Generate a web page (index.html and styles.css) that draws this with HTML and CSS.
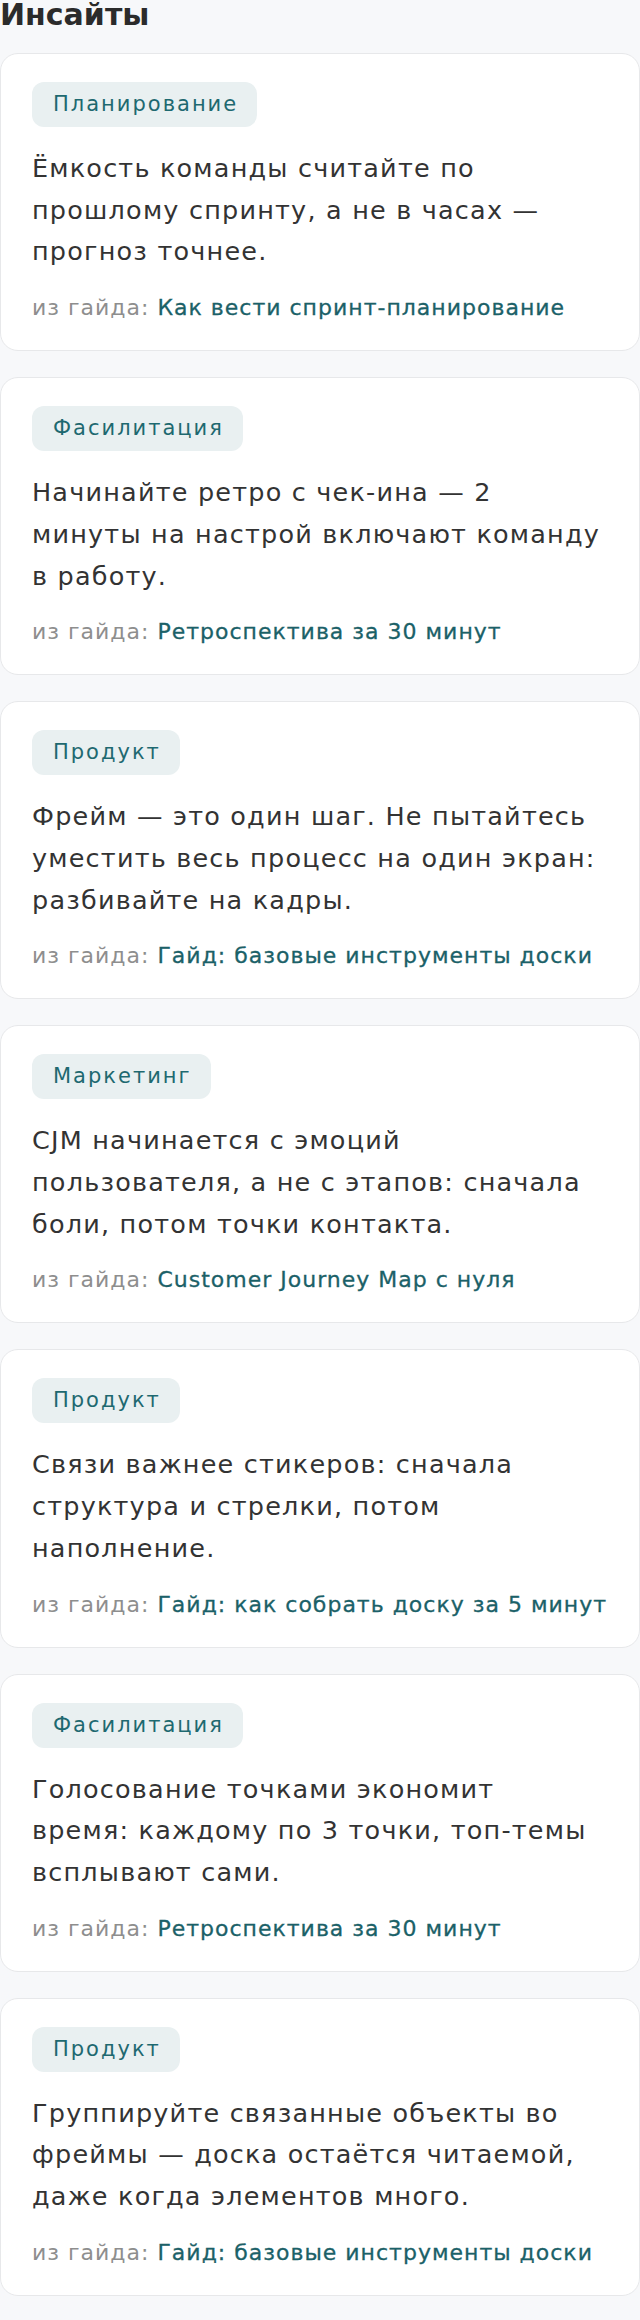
FILE: index.html
```html
<!DOCTYPE html>
<html lang="ru">
<head>
<meta charset="utf-8">
<title>Инсайты</title>
<link rel="stylesheet" href="styles.css">
</head>
<body>
<main class="page">
  <h1 class="title">Инсайты</h1>
  <div class="list">
    <article class="card">
      <span class="tag">Планирование</span>
      <p class="text">Ёмкость команды считайте по прошлому спринту, а не в часах — прогноз точнее.</p>
      <p class="src"><span class="src-label">из гайда:</span> <a class="src-link" href="#">Как вести спринт-планирование</a></p>
    </article>
    <article class="card">
      <span class="tag">Фасилитация</span>
      <p class="text">Начинайте ретро с чек-ина — 2 минуты на настрой включают команду в работу.</p>
      <p class="src"><span class="src-label">из гайда:</span> <a class="src-link" href="#">Ретроспектива за 30 минут</a></p>
    </article>
    <article class="card">
      <span class="tag">Продукт</span>
      <p class="text">Фрейм — это один шаг. Не пытайтесь уместить весь процесс на один экран: разбивайте на кадры.</p>
      <p class="src"><span class="src-label">из гайда:</span> <a class="src-link" href="#">Гайд: базовые инструменты доски</a></p>
    </article>
    <article class="card">
      <span class="tag">Маркетинг</span>
      <p class="text">CJM начинается с эмоций пользователя, а не с этапов: сначала боли, потом точки контакта.</p>
      <p class="src"><span class="src-label">из гайда:</span> <a class="src-link" href="#">Customer Journey Map с нуля</a></p>
    </article>
    <article class="card">
      <span class="tag">Продукт</span>
      <p class="text">Связи важнее стикеров: сначала структура и стрелки, потом наполнение.</p>
      <p class="src"><span class="src-label">из гайда:</span> <a class="src-link" href="#">Гайд: как собрать доску за 5 минут</a></p>
    </article>
    <article class="card">
      <span class="tag">Фасилитация</span>
      <p class="text">Голосование точками экономит время: каждому по 3 точки, топ-темы всплывают сами.</p>
      <p class="src"><span class="src-label">из гайда:</span> <a class="src-link" href="#">Ретроспектива за 30 минут</a></p>
    </article>
    <article class="card">
      <span class="tag">Продукт</span>
      <p class="text">Группируйте связанные объекты во фреймы — доска остаётся читаемой, даже когда элементов много.</p>
      <p class="src"><span class="src-label">из гайда:</span> <a class="src-link" href="#">Гайд: базовые инструменты доски</a></p>
    </article>
  </div>
</main>
</body>
</html>
```
FILE: styles.css
```css
html, body {
  margin: 0;
  padding: 0;
}

body {
  background: #f7f8fa;
  font-family: "DejaVu Sans", "Noto Sans", sans-serif;
  color: #333333;
}

.page {
  display: flex;
  flex-direction: column;
}

.title {
  margin: 0 0 23px;
  font-size: 30px;
  line-height: 30px;
  font-weight: 700;
  color: #2b2b2b;
}

.list {
  display: flex;
  flex-direction: column;
  gap: 26px;
}

.card {
  background: #ffffff;
  border: 1px solid #e7e8ea;
  border-radius: 18px;
  padding: 28px 31px 26px;
  display: flex;
  flex-direction: column;
  align-items: flex-start;
}

.tag {
  background: #e9f0f1;
  color: #1e6970;
  border-radius: 12px;
  font-size: 21px;
  letter-spacing: 2px;
  line-height: 25px;
  padding: 10px 19px 10px 21px;
}

.text {
  margin: 21px 0 0;
  max-width: 568.5px;
  font-size: 25.5px;
  letter-spacing: 1.2px;
  line-height: 41.7px;
  color: #333333;
}

.src {
  margin: 18px 0 0;
  font-size: 22px;
  letter-spacing: 1px;
  line-height: 33px;
  white-space: nowrap;
}

.src-label {
  color: #8e8e8e;
}

.src-link {
  color: #1b6168;
  text-decoration: none;
  -webkit-text-stroke: 0.3px #1b6168;
}
```
